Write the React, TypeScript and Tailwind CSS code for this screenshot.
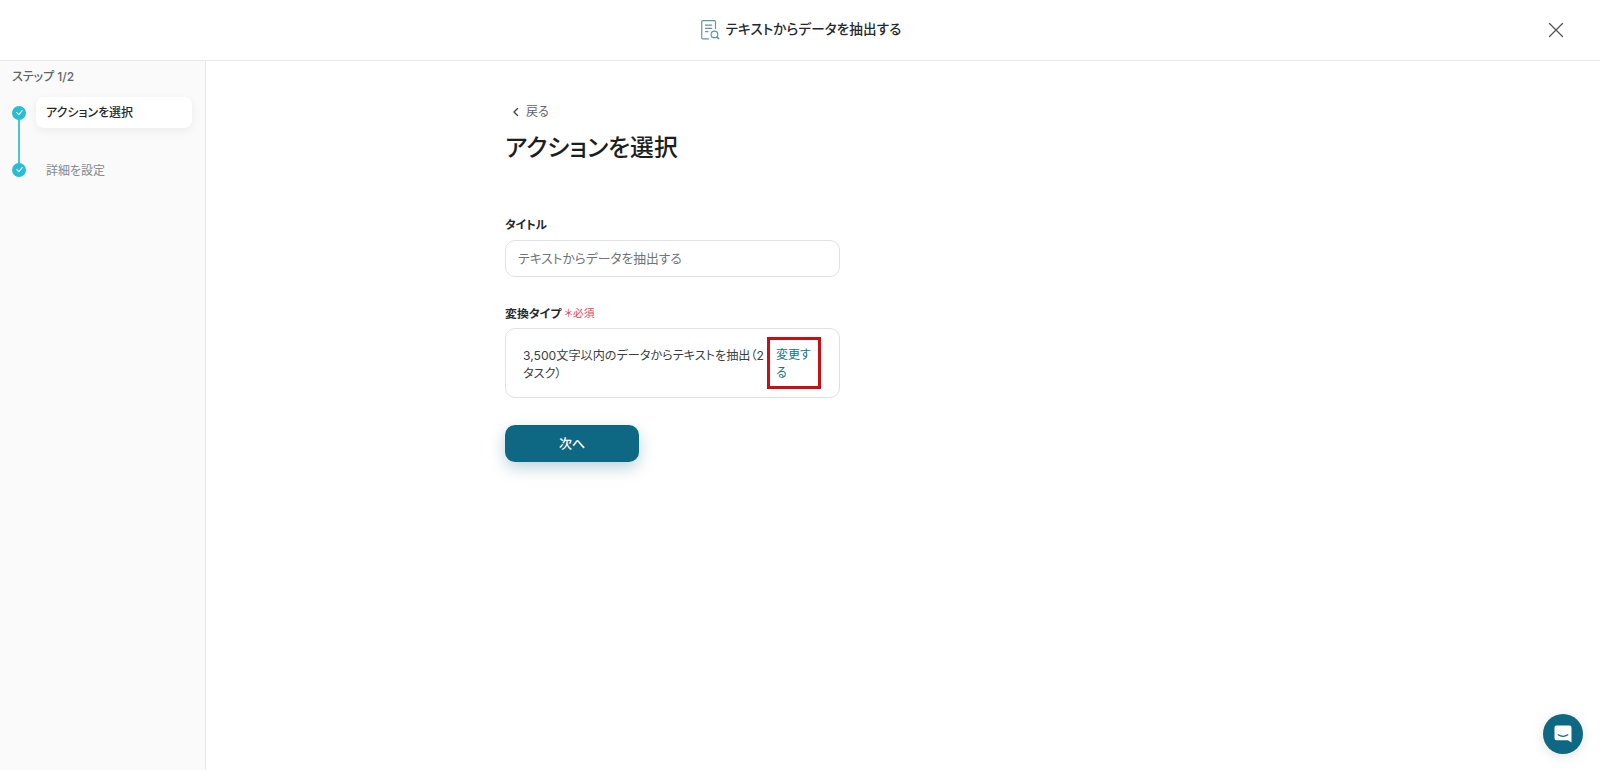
import React from "react";

const font = { fontFamily: 'Inter, "Noto Sans CJK JP", "Noto Sans", sans-serif' };

function Check() {
  return (
    <span className="relative z-10 flex h-[14px] w-[14px] items-center justify-center rounded-full bg-[#27bdd2]">
      <svg width="9" height="9" viewBox="0 0 10 10" fill="none" stroke="#fff" strokeWidth="1.3" strokeLinecap="round" strokeLinejoin="round">
        <path d="M2 5.200 4.200 7.300 8 3" />
      </svg>
    </span>
  );
}

export default function App() {
  return (
    <div style={font} className="flex h-[770px] w-[1600px] flex-col overflow-hidden bg-white text-[#24292e] [font-feature-settings:'palt']">
      <header className="relative flex h-[61px] shrink-0 items-center justify-center border-b border-[#e8e8e8] bg-white">
        <div className="mb-[1px] flex items-center gap-[5px]">
          <svg width="22" height="22" viewBox="0 0 20 20" fill="none" stroke="#5c96a8" strokeWidth="1.050">
            <path d="M9 18H3.500a1 1 0 0 1-1-1V2.500a1 1 0 0 1 1-1H14a1 1 0 0 1 1 1V9" />
            <path d="M5.500 5.500h6.500M5.500 8.500h6.500M5.500 11.500h3" />
            <circle cx="14" cy="14" r="3" />
            <path d="m16.200 16.200 2 2" strokeWidth="1.500" />
          </svg>
          <span className="text-[13.600px] font-medium leading-none tracking-[0.1px]">テキストからデータを抽出する</span>
        </div>
        <button className="absolute left-[1548px] top-[22px] text-[#555]" aria-label="閉じる">
          <svg width="16" height="16" viewBox="0 0 16 16" fill="none" stroke="currentColor" strokeWidth="1.300" strokeLinecap="round">
            <path d="M1.500 1.500 14.500 14.500M14.500 1.500 1.500 14.500" />
          </svg>
        </button>
      </header>

      <div className="flex min-h-0 flex-1">
        <aside className="w-[206px] shrink-0 border-r border-[#e8e8e8] bg-[#fafafa] pl-[12px] pr-[13px] pt-[7px]">
          <div className="text-[12px] font-medium leading-[18px] text-[#5f6368]">ステップ 1/2</div>
          <div className="relative mt-[11px]">
            <div className="absolute left-[6px] top-[16px] h-[58px] w-[2px] bg-[#4cc3d6]" />
            <div className="flex items-center">
              <Check />
              <div className="ml-[10px] flex h-[31px] flex-1 items-center rounded-[8px] bg-white pl-[10px] pt-[1px] text-[12px] font-medium text-[#24292e] shadow-[0_3px_10px_rgba(0,0,0,0.06)]">
                アクションを選択
              </div>
            </div>
            <div className="mt-[26px] flex h-[31px] items-center">
              <Check />
              <div className="ml-[20px] pt-[2px] text-[12px] text-[#85898d]">詳細を設定</div>
            </div>
          </div>
        </aside>

        <main className="flex-1 pl-[299px]">
          <div className="w-[335px]">
            <div className="mt-[42px] flex h-[18px] items-center pl-[6px] text-[12px] leading-none text-[#5f6368]">
              <svg width="10" height="10" viewBox="0 0 10 10" fill="none" stroke="#444" strokeWidth="1.400" strokeLinecap="round" strokeLinejoin="round">
                <path d="M6.500 1.500 3 5l3.500 3.500" />
              </svg>
              <span className="ml-[5px]">戻る</span>
            </div>
            <h1 className="mt-[11px] text-[23.800px] font-medium leading-[32px] text-[#1c1f22]">アクションを選択</h1>

            <div className="mt-[52px] text-[11.600px] font-bold leading-[18px]">タイトル</div>
            <div className="mt-[6px] flex h-[37px] items-center rounded-[10px] border border-[#dfe1e3] pl-[12px] text-[12.750px] text-[#70757a]">
              テキストからデータを抽出する
            </div>

            <div className="mt-[28px] flex items-center leading-[18px]">
              <span className="text-[11.900px] font-bold">変換タイプ</span>
              <span className="ml-[3px] text-[10.700px] text-[#e0455f]">＊必須</span>
            </div>
            <div className="mt-[5px] flex h-[70px] items-center rounded-[10px] border border-[#dfe1e3] pl-[17px] pr-[17px]">
              <div className="w-[244px] shrink-0 pt-[3px] text-[12.150px] leading-[18px] text-[#3a3f44]">
                3,500文字以内のデータからテキストを抽出（2タスク）
              </div>
              <div className="flex h-[52px] w-[54px] shrink-0 items-center border-[3px] border-[#c80f14] pl-[6px] pt-[2px] text-[12px] leading-[18px] text-[#1a7189]">
                変更する
              </div>
            </div>

            <button className="mt-[27px] flex h-[37px] w-[134px] items-center justify-center rounded-[10px] bg-[#0e6783] text-[13px] font-medium text-white shadow-[0_6px_16px_rgba(14,103,131,0.28)]">
              次へ
            </button>
          </div>
        </main>
      </div>

      <div className="fixed left-[1543px] top-[714px] flex h-[40px] w-[40px] items-center justify-center rounded-full bg-[#0e6783] shadow-[0_2px_12px_rgba(0,0,0,0.12)]">
        <svg width="20" height="20" viewBox="0 0 20 20">
          <path fill="#fff" d="M3.500 1.500h13a2 2 0 0 1 2 2V18.500l-3.600-2.200H3.500a2 2 0 0 1-2-2V3.500a2 2 0 0 1 2-2Z" />
          <path d="M5.200 10.800c3 1.900 6.600 1.900 9.600 0" fill="none" stroke="#0e6783" strokeWidth="1.200" strokeLinecap="round" />
        </svg>
      </div>
    </div>
  );
}
